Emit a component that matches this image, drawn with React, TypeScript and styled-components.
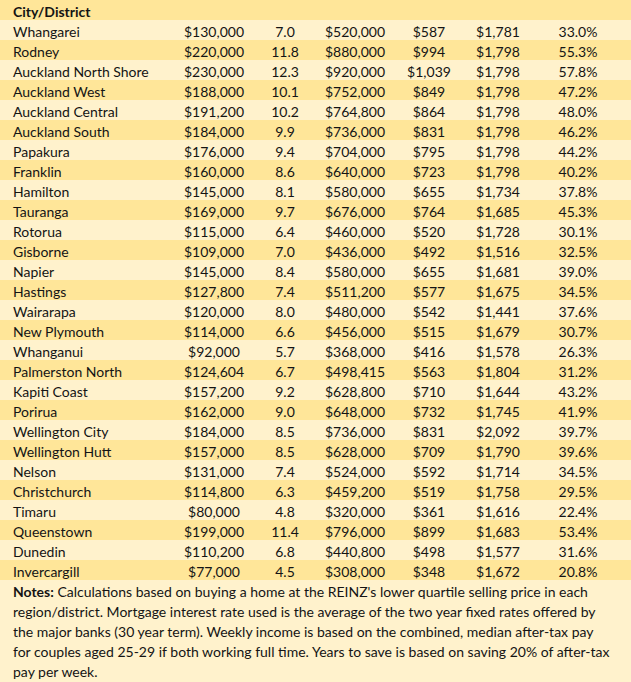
import React from "react";
import styled, { createGlobalStyle } from "styled-components";

const Global = createGlobalStyle`
  html, body { margin: 0; padding: 0; background: #fff2cc; }
  body { font-family: Lato, "Liberation Sans", sans-serif; color: #141414; }
`;

const Table = styled.div`
  width: 631px;
  display: flex;
  flex-direction: column;
`;

const Row = styled.div<{ $dark: boolean }>`
  display: grid;
  grid-template-columns: 170px 88px 54px 86px 62px 76px 84px 1fr;
  box-sizing: border-box;
  height: 20px;
  padding-top: 3px;
  align-items: start;
  background: ${(p) => (p.$dark ? "#ffe699" : "#fff2cc")};
  font-size: 14px;
  line-height: 17px;
`;

const NameCell = styled.div<{ $bold?: boolean }>`
  padding-left: 13px;
  white-space: nowrap;
  font-weight: ${(p) => (p.$bold ? 700 : 400)};
`;

const Cell = styled.div`
  text-align: center;
  white-space: nowrap;
`;

const Notes = styled.div`
  background: #fff2cc;
  padding: 2px 0 0 13px;
  font-size: 14px;
  line-height: 20px;
  white-space: nowrap;
`;

const Strong = styled.b`
  font-weight: 700;
`;

const data: [string, string, string, string, string, string, string][] = [
  ["Whangarei", "$130,000", "7.0", "$520,000", "$587", "$1,781", "33.0%"],
  ["Rodney", "$220,000", "11.8", "$880,000", "$994", "$1,798", "55.3%"],
  ["Auckland North Shore", "$230,000", "12.3", "$920,000", "$1,039", "$1,798", "57.8%"],
  ["Auckland West", "$188,000", "10.1", "$752,000", "$849", "$1,798", "47.2%"],
  ["Auckland Central", "$191,200", "10.2", "$764,800", "$864", "$1,798", "48.0%"],
  ["Auckland South", "$184,000", "9.9", "$736,000", "$831", "$1,798", "46.2%"],
  ["Papakura", "$176,000", "9.4", "$704,000", "$795", "$1,798", "44.2%"],
  ["Franklin", "$160,000", "8.6", "$640,000", "$723", "$1,798", "40.2%"],
  ["Hamilton", "$145,000", "8.1", "$580,000", "$655", "$1,734", "37.8%"],
  ["Tauranga", "$169,000", "9.7", "$676,000", "$764", "$1,685", "45.3%"],
  ["Rotorua", "$115,000", "6.4", "$460,000", "$520", "$1,728", "30.1%"],
  ["Gisborne", "$109,000", "7.0", "$436,000", "$492", "$1,516", "32.5%"],
  ["Napier", "$145,000", "8.4", "$580,000", "$655", "$1,681", "39.0%"],
  ["Hastings", "$127,800", "7.4", "$511,200", "$577", "$1,675", "34.5%"],
  ["Wairarapa", "$120,000", "8.0", "$480,000", "$542", "$1,441", "37.6%"],
  ["New Plymouth", "$114,000", "6.6", "$456,000", "$515", "$1,679", "30.7%"],
  ["Whanganui", "$92,000", "5.7", "$368,000", "$416", "$1,578", "26.3%"],
  ["Palmerston North", "$124,604", "6.7", "$498,415", "$563", "$1,804", "31.2%"],
  ["Kapiti Coast", "$157,200", "9.2", "$628,800", "$710", "$1,644", "43.2%"],
  ["Porirua", "$162,000", "9.0", "$648,000", "$732", "$1,745", "41.9%"],
  ["Wellington City", "$184,000", "8.5", "$736,000", "$831", "$2,092", "39.7%"],
  ["Wellington Hutt", "$157,000", "8.5", "$628,000", "$709", "$1,790", "39.6%"],
  ["Nelson", "$131,000", "7.4", "$524,000", "$592", "$1,714", "34.5%"],
  ["Christchurch", "$114,800", "6.3", "$459,200", "$519", "$1,758", "29.5%"],
  ["Timaru", "$80,000", "4.8", "$320,000", "$361", "$1,616", "22.4%"],
  ["Queenstown", "$199,000", "11.4", "$796,000", "$899", "$1,683", "53.4%"],
  ["Dunedin", "$110,200", "6.8", "$440,800", "$498", "$1,577", "31.6%"],
  ["Invercargill", "$77,000", "4.5", "$308,000", "$348", "$1,672", "20.8%"],
];

export default function App() {
  return (
    <>
      <Global />
      <Table>
        <Row $dark>
          <NameCell $bold>City/District</NameCell>
        </Row>
        {data.map((r, i) => (
          <Row key={r[0]} $dark={i % 2 === 1}>
            <NameCell>{r[0]}</NameCell>
            {r.slice(1).map((v, j) => (
              <Cell key={j}>{v}</Cell>
            ))}
          </Row>
        ))}
        <Notes>
          <Strong>Notes:</Strong> Calculations based on buying a home at the REINZ's lower quartile selling price in each
          <br />
          region/district. Mortgage interest rate used is the average of the two year fixed rates offered by
          <br />
          the major banks (30 year term). Weekly income is based on the combined, median after-tax pay
          <br />
          for couples aged 25-29 if both working full time. Years to save is based on saving 20% of after-tax
          <br />
          pay per week.
        </Notes>
      </Table>
    </>
  );
}
